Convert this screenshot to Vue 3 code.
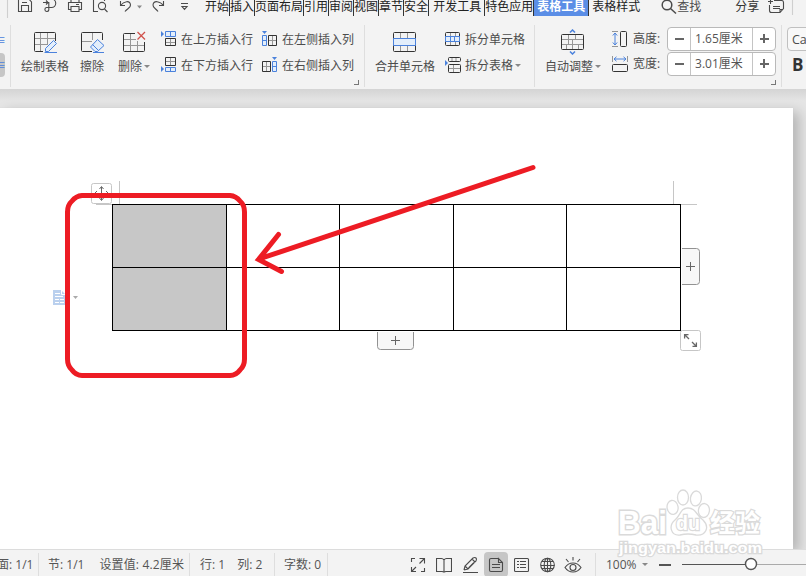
<script setup>
import { ref } from 'vue'

defineOptions({
  name: 'WriterTableView'
})

const tabs = [
  { label: '开始' },
  { label: '插入' },
  { label: '页面布局' },
  { label: '引用' },
  { label: '审阅' },
  { label: '视图' },
  { label: '章节' },
  { label: '安全' },
  { label: '开发工具', wide: true },
  { label: '特色应用' },
  { label: '表格工具', context: true },
  { label: '表格样式', wide: true }
]
const activeTab = ref('表格工具')

const rowHeight = ref(1.65)
const colWidth = ref(3.01)

const step = (target, delta) => {
  target.value = Math.max(0, +(target.value + delta).toFixed(2))
}
const stepHeight = (delta) => step(rowHeight, delta)
const stepWidth = (delta) => step(colWidth, delta)

// 2 rows x 5 columns, the first column is selected
const cells = Array.from({ length: 10 }, (_, i) => ({ id: i, selected: i % 5 === 0 }))
</script>

<template>
  <div class="app">
    <!-- Quick access + tabs -->
    <header class="topbar">
      <div class="quick">
        <svg width="200" height="18" viewBox="0 0 200 18" class="line">
          <path class="sep" d="M7.500 0V18" />
          <path d="M18.500 -2V11.500H31.500V2L28 -2M21.500 11V5.500H28.500V11M22 2.500H27" />
          <path d="M43 2.500H48M46 .5l2 2l-2 2M48 -1H51.500A4.200 4.200 0 0 1 51.500 7.500H46.500A2 2 0 1 0 48.800 10V2" />
          <path d="M71 2V-2H79V2M70.500 9.500H68.500V2.500H81.500V9.500H79.500M71 6.500H79V11.500H71ZM76 4.500H79" />
          <path d="M98 11.500H93.500V-2H104.500V1M107.500 12l-3-3" />
          <circle cx="102" cy="6" r="3.600" />
          <path d="M120.500 1V5.500H125M120.500 5.500C124 1 130 0 130.500 5C130.800 8 127 8.500 125 11.500" />
          <path class="caret" d="M137 5.500h5l-2.500 3z" />
          <path d="M163.500 1V5.500H159M163.500 5.500C160 1 153.500 0 153 5C152.800 8 156 8.500 158 11.500" />
          <path d="M181 3.500H188M182 6.500h5l-2.500 2.800z" />
        </svg>
      </div>
      <nav class="tabs">
        <button
          v-for="tab in tabs"
          :key="tab.label"
          class="tab"
          :class="{ wide: tab.wide, context: tab.context, active: activeTab === tab.label }"
          @click="activeTab = tab.label"
        >{{ tab.label }}</button>
      </nav>
      <div class="search">
        <svg width="16" height="18" viewBox="0 0 16 18" class="line">
          <circle cx="6" cy="5" r="4.800" stroke-width="1.500" />
          <path d="M9.500 8.500L15 13.500" stroke-width="1.500" />
        </svg>
        <span>查找</span>
      </div>
      <div class="share">
        <span>分享</span>
        <svg width="26" height="18" viewBox="0 0 26 18" class="line">
          <path d="M6 .5H13.500Q15.500 .5 15.500 2.500V8.500L12 12.500H3.500Q1.500 12.500 1.500 10.500V5M0 1.500H5M2.500 -1V4M5 6.500H12M5 8.500H12M12 12V9.500H15" />
          <path class="sep" d="M24.500 0V15" />
        </svg>
      </div>
    </header>

    <!-- Ribbon -->
    <section class="ribbon">
      <div class="group stub">
        <span class="mini">≡</span>
        <span class="mini pressed">≡</span>
      </div>

      <div class="group rows-group">
        <button class="big">
          <svg width="24" height="24" viewBox="0 0 24 24" class="grid-icon">
            <path class="thin" d="M1 7.500H22M1 13.500H15M7.500 1V20M14.500 1V14" />
            <path d="M10 20.500H2.500Q1.500 20.500 1.500 19.500V2.500Q1.500 1.500 2.500 1.500H21.500Q22.500 1.500 22.500 2.500V10" />
            <path class="blue fill" d="M20.500 9.500L23.500 12.500L15.500 20.500H12.500V17.500Z" />
            <path class="blue" d="M18 21.500H24M11.500 21.500H20" />
          </svg>
          <span>绘制表格</span>
        </button>
        <button class="big erase">
          <svg width="24" height="24" viewBox="0 0 24 24" class="grid-icon">
            <path class="thin" d="M1 10.500H12M12.500 1V9" />
            <path d="M12 20.500H2.500Q1.500 20.500 1.500 19.500V2.500Q1.500 1.500 2.500 1.500H21.500Q22.500 1.500 22.500 2.500V9" />
            <path class="blue fill" d="M17.500 8.500L24 14.500L17.500 20.500H15L10.500 16Z" />
            <path class="blue" d="M12.500 13.500L18.500 19.500M13 21.500H24" />
          </svg>
          <span>擦除</span>
        </button>
        <button class="big delete">
          <svg width="28" height="24" viewBox="0 0 28 24" class="grid-icon">
            <path class="thin" d="M1 8.500H14M1 14.500H22M8.500 2V20M15.500 10V20" />
            <path d="M13 2.500H2.500Q1.500 2.500 1.500 3.500V19.500Q1.500 20.500 2.500 20.500H21.500Q22.500 20.500 22.500 19.500V11" />
            <path class="red" d="M15.500 1L23 8.500M23 1L15.500 8.500" />
          </svg>
          <span>删除<i class="caret-down"></i></span>
        </button>

        <div class="pair first">
          <button class="small">
            <svg width="16" height="16" viewBox="0 0 16 16" class="grid-icon">
              <path class="blue fill" d="M4.500 .5H14.500V5.500H4.500ZM9.500 1V5" />
              <path d="M4.500 7.500H14.500V14.500H4.500Z" />
              <path class="thin" d="M9.500 8V14M5 11.500H14" />
              <path class="arrow" d="M0 0V6L3 3Z" />
            </svg>
            <span>在上方插入行</span>
          </button>
          <button class="small">
            <svg width="16" height="16" viewBox="0 0 16 16" class="grid-icon">
              <path class="blue fill" d="M4.500 10.500H14.500V14.500H4.500ZM9.500 11V14" />
              <path d="M4.500 .5H14.500V8.500H4.500Z" />
              <path class="thin" d="M9.500 1V8M5 4.500H14" />
              <path class="arrow" d="M0 9V15L3 12Z" />
            </svg>
            <span>在下方插入行</span>
          </button>
        </div>
        <div class="pair second">
          <button class="small">
            <svg width="16" height="16" viewBox="0 0 16 16" class="grid-icon">
              <path class="blue fill" d="M.5 4.500H4.500V14.500H.5ZM1 9.500H4" />
              <path d="M6.500 4.500H14.500V14.500H6.500Z" />
              <path class="thin" d="M10.500 5V14M7 9.500H14" />
              <path class="arrow" d="M0 0H5L2.500 3Z" />
            </svg>
            <span>在左侧插入列</span>
          </button>
          <button class="small">
            <svg width="16" height="16" viewBox="0 0 16 16" class="grid-icon">
              <path class="blue fill" d="M10.500 4.500H14.500V14.500H10.500ZM11 9.500H14" />
              <path d="M.5 4.500H8.500V14.500H.5Z" />
              <path class="thin" d="M4.500 5V14M1 9.500H8" />
              <path class="arrow" d="M10 0H15L12.500 3Z" />
            </svg>
            <span>在右侧插入列</span>
          </button>
        </div>
        <i class="launcher"></i>
      </div>

      <div class="group merge-group">
        <button class="big">
          <svg width="25" height="24" viewBox="0 0 25 24" class="grid-icon">
            <path class="thin" d="M8.500 2V7M15.500 2V7M8.500 15V20M15.500 15V20" />
            <rect x="1.500" y="1.500" width="22" height="19" rx="1" />
            <path class="blue fill" d="M1.500 7.500H23.500V14.500H1.500Z" />
          </svg>
          <span>合并单元格</span>
        </button>
        <div class="pair split">
          <button class="small">
            <svg width="16" height="16" viewBox="0 0 16 16" class="grid-icon">
              <path class="thin" d="M5.500 1V5M10.500 1V5M5.500 11V14M10.500 11V14" />
              <rect x=".5" y="1.500" width="14" height="13" rx="1" />
              <path class="blue fill" d="M.5 5.500H14.500V10.500H.5ZM5.500 6V10M9.500 6V10" />
            </svg>
            <span>拆分单元格</span>
          </button>
          <button class="small">
            <svg width="16" height="16" viewBox="0 0 16 16" class="grid-icon">
              <path class="thin" d="M7 1V5M11 1V5M8.500 8V15M4 11.500H15" />
              <rect x="3.500" y=".5" width="12" height="4" rx="1" />
              <rect x="3.500" y="7.500" width="12" height="8" rx="1" />
              <path class="arrow" d="M0 3V9L3 6Z" />
            </svg>
            <span>拆分表格<i class="caret-down"></i></span>
          </button>
        </div>
      </div>

      <div class="group size-group">
        <button class="big">
          <svg width="24" height="26" viewBox="0 0 24 26" class="grid-icon">
            <path class="thin" d="M1 10.500H23M1 15.500H23M8.500 5V15M15.500 5V10M12.500 10V20M6.500 15V20M18.500 15V20" />
            <rect x="1.500" y="5.500" width="22" height="15" rx="1" />
            <path class="blue" stroke-width="1.500" d="M10 3.500L12.500 1L15 3.500M10 22.500L12.500 25L15 22.500" />
          </svg>
          <span>自动调整<i class="caret-down"></i></span>
        </button>
        <div class="sizes">
          <div class="size-row">
            <svg width="18" height="18" viewBox="0 0 18 18" class="grid-icon">
              <path class="thin" d="M1 1.500H7M1 16.500H7" />
              <rect x="9.500" y="1.500" width="6" height="15" rx="1" />
              <path class="blue" d="M4 3V15M1.800 5.500L4 3L6.200 5.500M1.800 12.500L4 15L6.200 12.500" />
            </svg>
            <label>高度:</label>
            <div class="spinner">
              <button @click="stepHeight(-0.01)"><i class="minus"></i></button>
              <span>{{ rowHeight.toFixed(2) }}厘米</span>
              <button @click="stepHeight(0.01)"><i class="plus"></i></button>
            </div>
          </div>
          <div class="size-row">
            <svg width="18" height="18" viewBox="0 0 18 18" class="grid-icon">
              <path class="thin" d="M1.500 1V7M16.500 1V7" />
              <rect x="1.500" y="9.500" width="15" height="7" rx="1" />
              <path class="blue" d="M3 4H15M5.500 1.800L3 4L5.500 6.200M12.500 1.800L15 4L12.500 6.200" />
            </svg>
            <label>宽度:</label>
            <div class="spinner">
              <button @click="stepWidth(-0.01)"><i class="minus"></i></button>
              <span>{{ colWidth.toFixed(2) }}厘米</span>
              <button @click="stepWidth(0.01)"><i class="plus"></i></button>
            </div>
          </div>
        </div>
        <i class="launcher"></i>
      </div>

      <div class="group font-group">
        <div class="font-box">Calibri</div>
        <b>B</b>
      </div>
    </section>

    <!-- Document -->
    <main class="workspace">
      <div class="page">
        <div class="table">
          <div v-for="cell in cells" :key="cell.id" class="cell" :class="{ selected: cell.selected }"></div>
        </div>

        <!-- Table handles and drawn marks over the page -->
        <svg class="overlay" width="806" height="441" viewBox="0 108 806 441">
          <g fill="none" stroke="#c6c6c6">
            <path d="M119.500 181V204M673.500 181V204M681 204.500H697M96 204.500H112" />
            <rect x="91.500" y="183.500" width="20" height="20" rx="2" fill="#fff" />
            <rect x="680.500" y="330.500" width="20" height="20" rx="2" fill="#fff" />
          </g>
          <g fill="#f7f7f7" stroke="#929292">
            <path d="M682 248.500H696.500Q699.500 248.500 699.500 251.500V281.500Q699.500 284.500 696.500 284.500H682" />
            <path d="M377.500 332V346.500Q377.500 349.500 380.500 349.500H410.500Q413.500 349.500 413.500 346.500V332" />
          </g>
          <g fill="none" stroke="#666">
            <path d="M686 266.500H695M690.500 262V271M391 340.500H400M395.500 336V345" />
            <path d="M101.500 187V200M99.500 189L101.500 186.500L103.500 189M99.500 198L101.500 200.500L103.500 198M97 191L94.500 193.500L97 196M106 191L108.500 193.500L106 196M95 193.500H108" />
            <path stroke-width="1.300" d="M684.600 338.500V334.600H688.500M685 335L689 339M696.400 342.500V346.400H692.500M696 346L692 342" />
          </g>
          <path fill="#bad0ee" d="M53 290H61L65 294V305H53Z" />
          <path fill="none" stroke="#fff" d="M55 293.500H60M61.500 290V294.500H65M55 296.500H63M55 299.500H59M60 299.500H64M55 302.500H59M60 302.500H64" />
          <path fill="#aaa" d="M73 296H78L75.500 299Z" />
          <g class="mark">
            <path d="M82 195.500H230Q236 196 240 201Q244.500 205 244.500 212V359Q244.500 366 240 370Q236 375.500 230 375.500H82Q76 375.500 72 370Q67.500 366 67.500 359V212Q67.500 205 72 201Q76 196 82 195.500Z" />
            <path d="M533 167.500L259 259M278.500 234.500L258.500 259.500L281.500 271.500" />
          </g>
        </svg>
      </div>
    </main>

    <!-- Status bar -->
    <footer class="status">
      <span class="cell-info page-no">面: 1/1</span>
      <span class="cell-info section"><span>节: 1/1</span><span class="setting">设置值: 4.2厘米</span></span>
      <span class="cell-info cursor-pos"><span>行: 1</span><span>列: 2</span></span>
      <span class="cell-info words">字数: 0</span>
      <div class="views">
        <svg width="16" height="18" viewBox="0 0 16 18" class="line">
          <path d="M9.500 2.500H14.500V7.500M14.500 2.500L9.500 7.500M1.500 6V2.500H5M1.500 11V15.500H6M1.500 15.500L6 11M14.500 12V15.500H11" />
        </svg>
        <svg width="16" height="18" viewBox="0 0 16 18" class="line">
          <path d="M8 4Q7 2.500 5.500 2.500H.5V15.500H6Q7.500 15.500 8 16Q8.500 15.500 10 15.500H15.500V2.500H10.500Q9 2.500 8 4V16" />
        </svg>
        <svg width="16" height="18" viewBox="0 0 16 18" class="line">
          <path d="M2 14L3 10L11 2Q13 1 14 2Q15 3 14 5L6 13L2 14M10 3L13 6M3 10L6 13M6.500 12L12 6.500M1 16.500H16" />
        </svg>
        <span class="view-on">
          <svg width="16" height="18" viewBox="0 0 16 18" class="line">
            <path d="M10.500 2.500H3Q1.500 2.500 1.500 4V14Q1.500 15.500 3 15.500H13Q14.500 15.500 14.500 14V6.500L10.500 2.500V6.500H14.500M4 8.500H12M4 11.500H12" />
          </svg>
        </span>
        <svg width="16" height="18" viewBox="0 0 16 18" class="line">
          <rect x=".5" y="2.500" width="14" height="13" rx="1" />
          <path d="M3 5.500H5M3 8.500H5M3 11.500H5M6 5.500H12M6 8.500H12M6 11.500H12" />
        </svg>
        <svg width="16" height="18" viewBox="0 0 16 18" class="line">
          <circle cx="7.500" cy="9" r="6.800" />
          <ellipse cx="7.500" cy="9" rx="3.300" ry="6.800" />
          <path d="M1 9.500H14.500M2 5.500H13M2 12.500H13M7.500 2V16" />
        </svg>
        <svg width="18" height="18" viewBox="0 0 18 18" class="line eye">
          <path d="M1 11.500Q4 7 9 7T17 11.500Q14 16 9 16T1 11.500ZM9 1V4.500M2 3L4.500 6M16 3L13.500 6" />
          <circle cx="9" cy="11.500" r="3" />
        </svg>
      </div>
      <div class="zoom">
        <span>100%</span>
        <i class="caret-down"></i>
        <i class="zoom-out"></i>
        <svg width="124" height="16" viewBox="0 0 124 16">
          <path d="M0 7.500H63" stroke="#555" />
          <path d="M75 7.500H124" stroke="#aaa" />
          <circle cx="69" cy="7" r="5.500" fill="#fff" stroke="#555" stroke-width="1.400" />
        </svg>
      </div>
    </footer>

    <svg class="watermark" width="150" height="72" viewBox="0 0 150 72">
      <g class="paw">
        <ellipse cx="58.500" cy="19.500" rx="5.500" ry="7" transform="rotate(-10 58 19)" />
        <ellipse cx="69" cy="9.500" rx="5.500" ry="7.500" />
        <ellipse cx="82" cy="10.500" rx="5.500" ry="7.500" transform="rotate(8 82 10)" />
        <ellipse cx="90" cy="22.500" rx="5.500" ry="7" transform="rotate(8 90 22)" />
        <path d="M74 20C66 20 67 27 61 32C54 38 57 48 66 47Q74 45 82 47C92 48 96 39 89 32C82 27 82 20 74 20Z" />
      </g>
      <text x="4" y="46" class="wm-brand" textLength="49" lengthAdjust="spacingAndGlyphs">Bai</text>
      <text x="62" y="42" class="wm-du" textLength="24" lengthAdjust="spacingAndGlyphs">du</text>
      <text x="96" y="44" class="wm-cn" textLength="50" lengthAdjust="spacingAndGlyphs">经验</text>
      <text x="5" y="65" class="wm-url" textLength="143" lengthAdjust="spacingAndGlyphs">jingyan.baidu.com</text>
    </svg>
  </div>
</template>

<style>
body {
  margin: 0;
  overflow: hidden;
}
</style>

<style scoped>
.app {
  position: relative;
  display: flex;
  flex-direction: column;
  width: 806px;
  height: 576px;
  overflow: hidden;
  background: #f3f3f3;
  font-family: 'Open Sans', 'Noto Sans CJK SC', sans-serif;
  font-size: 12px;
  line-height: 16px;
  color: #4c4c4c;
  white-space: nowrap;
}

button {
  border: none;
  padding: 0;
  margin: 0;
  background: none;
  font: inherit;
  color: inherit;
  cursor: pointer;
}

svg {
  display: block;
  flex-shrink: 0;
}

/* Icons */
.line {
  fill: none;
  stroke: #4a4a4a;
  stroke-width: 1.1;
}
.line .sep {
  stroke: #cfcfcf;
}
.line .caret {
  fill: #888;
  stroke: none;
}
.grid-icon {
  fill: none;
  stroke: #333;
}
.grid-icon .thin {
  stroke: #969696;
}
.grid-icon .blue {
  stroke: #4b82dc;
}
.grid-icon .blue.fill {
  fill: #e3eefb;
}
.grid-icon .red {
  stroke: #d0504a;
  stroke-width: 1.3;
}
.grid-icon .arrow {
  fill: #4b82dc;
  stroke: none;
}
.caret-down {
  display: inline-block;
  border: 3px solid transparent;
  border-top-color: #888;
  border-bottom: 0;
  margin-left: 2px;
  vertical-align: 3px;
}

/* Top bar */
.topbar {
  display: flex;
  height: 18px;
  flex-shrink: 0;
}
.quick {
  width: 205px;
}
.tabs {
  display: flex;
  color: #222;
}
.tab {
  height: 16px;
  line-height: 14px;
  padding-bottom: 2px;
  border-right: 1px solid #333;
}
.tab.wide {
  padding: 0 3px 2px 4px;
}
.tab.wide:last-child {
  padding-left: 3px;
  border: none;
}
.tab.context {
  padding: 0 3px 2px;
}
.tab.active {
  background: #5b8ee6;
  color: #fff;
  font-weight: bold;
}
.search {
  display: flex;
  margin-left: 18px;
  line-height: 14px;
}
.share {
  display: flex;
  gap: 9px;
  margin-left: 34px;
  line-height: 14px;
  color: #333;
}

/* Ribbon */
.ribbon {
  display: flex;
  height: 71px;
  flex-shrink: 0;
  padding-top: 7px;
  box-sizing: border-box;
}
.group {
  position: relative;
  display: flex;
  height: 62px;
  box-sizing: border-box;
  border-right: 1px solid #dedede;
  flex-shrink: 0;
}
.stub {
  width: 11px;
  flex-direction: column;
  gap: 1px;
  padding-top: 3px;
  overflow: hidden;
}
.mini {
  width: 5px;
  height: 24px;
  line-height: 26px;
  text-indent: -6px;
  color: #4b82dc;
  overflow: hidden;
}
.mini.pressed {
  background: #c6c6c6;
  border-radius: 0 4px 4px 0;
}
.rows-group {
  width: 354px;
  padding-left: 10px;
}
.big {
  display: flex;
  flex-direction: column;
  align-items: center;
  height: 51px;
  padding-top: 6px;
  gap: 4px;
}
.big.erase {
  margin-left: 11px;
}
.big.delete {
  margin-left: 14px;
  align-items: flex-start;
}
.big.delete svg {
  margin-left: 4px;
}
.pair {
  display: flex;
  flex-direction: column;
  gap: 10px;
  padding-top: 6px;
}
.pair.first {
  margin-left: 11px;
}
.pair.second {
  margin-left: 9px;
}
.small {
  display: flex;
  align-items: center;
  height: 16px;
  gap: 4px;
}
.small span {
  padding-top: 2px;
}
.launcher {
  position: absolute;
  right: 5px;
  bottom: 2px;
  width: 4px;
  height: 4px;
  border-right: 1px solid #777;
  border-bottom: 1px solid #777;
}
.merge-group {
  width: 170px;
  padding-left: 10px;
}
.merge-group .big svg {
  margin-right: 2px;
}
.pair.split {
  margin-left: 10px;
}
.size-group {
  width: 247px;
  padding-left: 10px;
}
.size-group .big {
  align-items: flex-start;
  padding-top: 4px;
}
.size-group .big svg {
  margin-left: 15px;
}
.sizes {
  display: flex;
  flex-direction: column;
  gap: 1px;
  margin-left: 10px;
  padding-top: 2px;
}
.size-row {
  display: flex;
  align-items: center;
  height: 24px;
}
.size-row label {
  width: 34px;
  margin-left: 4px;
}
.spinner {
  display: flex;
  width: 109px;
  height: 24px;
  box-sizing: border-box;
  border: 1px solid #b9b9b9;
  border-radius: 4px;
  background: #fff;
  color: #555;
  line-height: 22px;
}
.spinner span {
  width: 57px;
  padding-left: 4px;
  border: 1px solid #c4c4c4;
  border-width: 0 1px;
}
.spinner button {
  display: flex;
  align-items: center;
  justify-content: center;
  width: 22px;
}
.minus,
.plus {
  position: relative;
  width: 9px;
  height: 1.500px;
  background: #666;
}
.plus::after {
  content: '';
  position: absolute;
  left: 3.800px;
  top: -3.800px;
  width: 1.500px;
  height: 9px;
  background: #666;
}
.font-group {
  flex-direction: column;
  border: none;
  padding: 2px 0 0 5px;
}
.font-box {
  width: 60px;
  height: 24px;
  box-sizing: border-box;
  padding-left: 4px;
  border: 1px solid #c0c0c0;
  border-radius: 4px;
  background: #f8f8f8;
  font-size: 12.500px;
  line-height: 23px;
}
.font-group b {
  margin: 4px 0 0 5px;
  font-size: 17px;
  line-height: 20px;
  color: #333;
}

/* Document */
.workspace {
  height: 460px;
  flex-shrink: 0;
  box-sizing: border-box;
  padding-top: 19px;
  background: linear-gradient(#d4d4d4, #e5e5e5 12px, #e5e5e5);
}
.page {
  position: relative;
  width: 793px;
  height: 441px;
  box-sizing: border-box;
  padding: 96px 0 0 112px;
  background: #fff;
  box-shadow: 0 0 1px #ccc, 6px 4px 12px rgba(0, 0, 0, 0.22);
}
.table {
  display: grid;
  grid-template-columns: 114px 113px 114px 113px 114px;
  grid-template-rows: 63px 63px;
  width: 568px;
  border-left: 1px solid #000;
  border-top: 1px solid #000;
}
.cell {
  border-right: 1px solid #000;
  border-bottom: 1px solid #000;
}
.cell.selected {
  background: #c7c7c7;
}
.overlay {
  position: absolute;
  left: 0;
  top: 0;
}
.mark {
  fill: none;
  stroke: #ed1c24;
  stroke-width: 5;
  stroke-linecap: round;
}

/* Status bar */
.status {
  position: relative;
  display: flex;
  align-items: center;
  height: 27px;
  box-sizing: border-box;
  border-top: 1px solid #dcdcdc;
  padding-top: 3px;
  background: #f3f3f3;
  color: #555;
}
.cell-info {
  display: flex;
  height: 24px;
  line-height: 24px;
  box-sizing: border-box;
  border-right: 1px solid #dedede;
}
.page-no {
  width: 39px;
  text-indent: -3px;
}
.section {
  width: 151px;
  padding-left: 9px;
  gap: 15px;
}
.setting {
  letter-spacing: 0.150px;
}
.cursor-pos {
  width: 85px;
  padding-left: 10px;
  gap: 12px;
}
.words {
  width: 53px;
  padding-left: 9px;
}
.views {
  display: flex;
  align-items: center;
  width: 185px;
  height: 24px;
  margin-left: 82px;
  gap: 10px;
  border-right: 1px solid #dedede;
}
.view-on {
  margin: 0 -4px;
  padding: 4px 4px 3px;
  border-radius: 4px;
  background: #c6c6c6;
}
.eye {
  margin-left: -2px;
}
.zoom {
  display: flex;
  align-items: center;
  margin-left: 10px;
}
.zoom .caret-down {
  margin-left: 5px;
}
.zoom-out {
  width: 12px;
  height: 2px;
  margin: 0 11px 0 11px;
  background: #555;
}

/* Watermark */
.watermark {
  position: absolute;
  left: 614px;
  top: 488px;
  fill: #fff;
  stroke: #dadada;
  stroke-width: 1.3;
  pointer-events: none;
}
.watermark text {
  font-family: 'Liberation Sans', 'Noto Sans CJK SC', sans-serif;
  font-weight: bold;
  paint-order: stroke;
  stroke-width: 2.4;
}
.watermark .wm-brand {
  font-size: 33px;
  stroke-width: 3;
}
.wm-du {
  font-size: 21px;
}
.wm-cn {
  font-size: 25px;
}
.wm-url {
  font-size: 15px;
}
</style>
